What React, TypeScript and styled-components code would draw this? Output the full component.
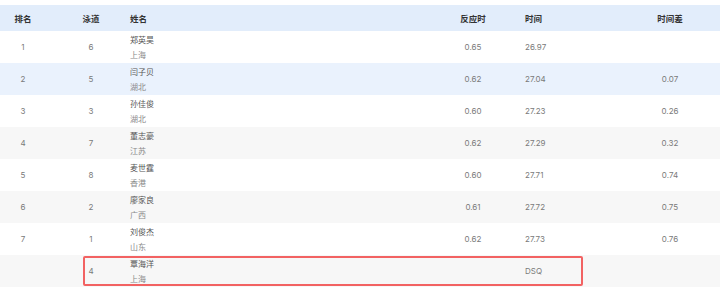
import React from "react";
import styled, { createGlobalStyle } from "styled-components";

const Global = createGlobalStyle`
  html, body { margin: 0; padding: 0; background: #ffffff; }
  body { font-family: Inter, "Noto Sans CJK SC", "Noto Sans", sans-serif; }
`;

type Row = {
  rank: string;
  lane: string;
  name: string;
  team: string;
  rt: string;
  time: string;
  diff: string;
  tone: "plain" | "stripe" | "active";
  flagged?: boolean;
};

const rows: Row[] = [
  { rank: "1", lane: "6", name: "郑英昊", team: "上海", rt: "0.65", time: "26.97", diff: "", tone: "plain" },
  { rank: "2", lane: "5", name: "闫子贝", team: "湖北", rt: "0.62", time: "27.04", diff: "0.07", tone: "active" },
  { rank: "3", lane: "3", name: "孙佳俊", team: "湖北", rt: "0.60", time: "27.23", diff: "0.26", tone: "plain" },
  { rank: "4", lane: "7", name: "董志豪", team: "江苏", rt: "0.62", time: "27.29", diff: "0.32", tone: "stripe" },
  { rank: "5", lane: "8", name: "麦世霆", team: "香港", rt: "0.60", time: "27.71", diff: "0.74", tone: "plain" },
  { rank: "6", lane: "2", name: "廖家良", team: "广西", rt: "0.61", time: "27.72", diff: "0.75", tone: "stripe" },
  { rank: "7", lane: "1", name: "刘俊杰", team: "山东", rt: "0.62", time: "27.73", diff: "0.76", tone: "plain" },
  { rank: "", lane: "4", name: "覃海洋", team: "上海", rt: "", time: "DSQ", diff: "", tone: "stripe", flagged: true },
];

const Page = styled.div`
  width: 720px;
  padding-top: 5px;
`;

const Table = styled.div`
  display: flex;
  flex-direction: column;
`;

const grid = `
  display: grid;
  grid-template-columns: 46px 80px 312px 70px 112px 100px;
  align-items: center;
`;

const HeaderRow = styled.div`
  ${grid}
  height: 26px;
  background: #e2edfb;
  font-size: 8.5px;
  font-weight: 600;
  color: #333333;
`;

const toneBg = { plain: "#ffffff", stripe: "#f7f7f7", active: "#eaf2fd" };

const BodyRow = styled.div<{ $tone: Row["tone"] }>`
  ${grid}
  position: relative;
  height: 32px;
  background: ${(p) => toneBg[p.$tone]};
  font-size: 8px;
  color: #7a7a7a;
`;

const Cell = styled.div<{ $align?: "center" | "left"; $pl?: number }>`
  text-align: ${(p) => p.$align ?? "left"};
  padding-left: ${(p) => p.$pl ?? 0}px;
  white-space: nowrap;
`;

const NameCell = styled.div`
  display: flex;
  flex-direction: column;
  padding-left: 4px;
  line-height: 15px;
  padding-top: 1px;
`;

const Name = styled.span`
  color: #555555;
`;

const Team = styled.span`
  color: #8a8a8a;
`;

const Flag = styled.div`
  position: absolute;
  left: 83px;
  top: 1px;
  width: 500px;
  height: 30px;
  box-sizing: border-box;
  border: 2px solid #f26262;
  border-radius: 2px;
  pointer-events: none;
`;

export default function App() {
  return (
    <Page>
      <Global />
      <Table>
        <HeaderRow>
          <Cell $align="center">排名</Cell>
          <Cell $align="center" $pl={10}>泳道</Cell>
          <Cell $pl={4}>姓名</Cell>
          <Cell $align="center">反应时</Cell>
          <Cell $pl={17}>时间</Cell>
          <Cell $align="center">时间差</Cell>
        </HeaderRow>
        {rows.map((r, i) => (
          <BodyRow key={i} $tone={r.tone}>
            <Cell $align="center">{r.rank}</Cell>
            <Cell $align="center" $pl={10}>{r.lane}</Cell>
            <NameCell>
              <Name>{r.name}</Name>
              <Team>{r.team}</Team>
            </NameCell>
            <Cell $align="center">{r.rt}</Cell>
            <Cell $pl={17}>{r.time}</Cell>
            <Cell $align="center">{r.diff}</Cell>
            {r.flagged && <Flag />}
          </BodyRow>
        ))}
      </Table>
    </Page>
  );
}
